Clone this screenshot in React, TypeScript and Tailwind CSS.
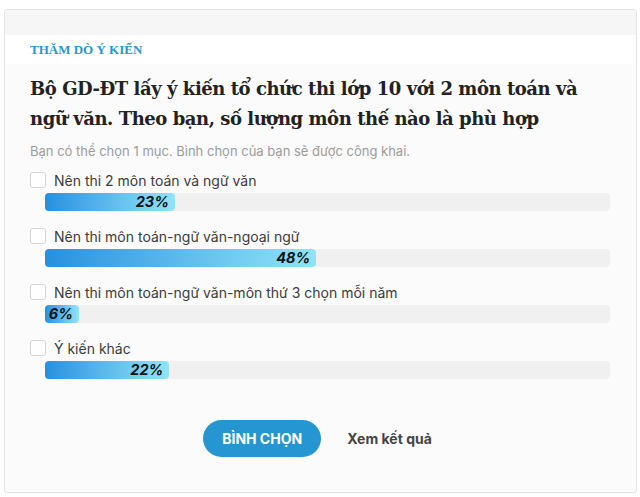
const options = [
  { label: 'Nên thi 2 môn toán và ngữ văn', percent: 23 },
  { label: 'Nên thi môn toán-ngữ văn-ngoại ngữ', percent: 48 },
  { label: 'Nên thi môn toán-ngữ văn-môn thứ 3 chọn mỗi năm', percent: 6 },
  { label: 'Ý kiến khác', percent: 22 },
]

const serif = { fontFamily: '"Liberation Serif", "DejaVu Serif", serif' }
const titleSerif = { fontFamily: '"DejaVu Serif", "Liberation Serif", serif' }

function PollOption({ label, percent }: { label: string; percent: number }) {
  return (
    <div className="flex flex-col">
      {/* Checkbox + label */}
      <label className="flex items-center h-[20px] gap-[8px] cursor-pointer">
        <span className="w-[16px] h-[16px] rounded-[3px] border border-[#d4d4d4] bg-white shrink-0" />
        <span className="text-[14px] text-[#3c3c3c]">{label}</span>
      </label>

      {/* Result bar */}
      <div className="mt-[3px] ml-[15px] w-[565px] h-[18px] rounded-[4px] bg-[#f0f0f0]">
        <div
          className="h-full rounded-[4px] bg-gradient-to-r from-[#2590de] to-[#90e4f8] flex items-center justify-end pr-[6px]"
          style={{ width: `${percent}%` }}
        >
          <span className="text-[14.5px] font-bold italic text-[#111] leading-none">{percent}%</span>
        </div>
      </div>
    </div>
  )
}

export default function App() {
  return (
    <div
      className="w-[640px] h-[497px] bg-white pt-[9px] pl-[4px] pr-[3px]"
      style={{ fontFamily: 'Inter, "Noto Sans", sans-serif' }}
    >
      <div className="h-[484px] border border-[#e4e4e4] rounded-[3px] bg-[#fbfbfb] flex flex-col overflow-hidden">
        {/* Top strip */}
        <div className="h-[25px] bg-[#f6f6f6]" />

        {/* Header */}
        <div className="h-[29px] bg-white px-[25px] flex items-center">
          <span className="text-[13px] font-bold text-[#2a95d2] uppercase" style={serif}>
            Thăm dò ý kiến
          </span>
        </div>

        <div className="px-[25px] flex flex-col">
          {/* Question */}
          <h2 className="mt-[10px] text-[18px] leading-[30px] font-bold text-[#222] tracking-[-0.45px]" style={titleSerif}>
            Bộ GD-ĐT lấy ý kiến tổ chức thi lớp 10 với 2 môn toán và ngữ văn. Theo bạn, số lượng môn thế nào là phù hợp
          </h2>
          <p className="mt-[7px] text-[13px] leading-[20px] text-[#9b9b9b]">
            Bạn có thể chọn 1 mục. Bình chọn của bạn sẽ được công khai.
          </p>

          {/* Options */}
          <div className="mt-[9px] flex flex-col gap-[15px]">
            {options.map((o) => (
              <PollOption key={o.label} label={o.label} percent={o.percent} />
            ))}
          </div>

          {/* Actions */}
          <div className="mt-[41px] flex items-center justify-center gap-[26px] pr-[6px]">
            <button className="w-[118px] h-[37px] rounded-full bg-[#2596d1] text-white text-[14px] font-bold">
              BÌNH CHỌN
            </button>
            <button className="text-[14px] font-bold text-[#444]">Xem kết quả</button>
          </div>
        </div>
      </div>
    </div>
  )
}
